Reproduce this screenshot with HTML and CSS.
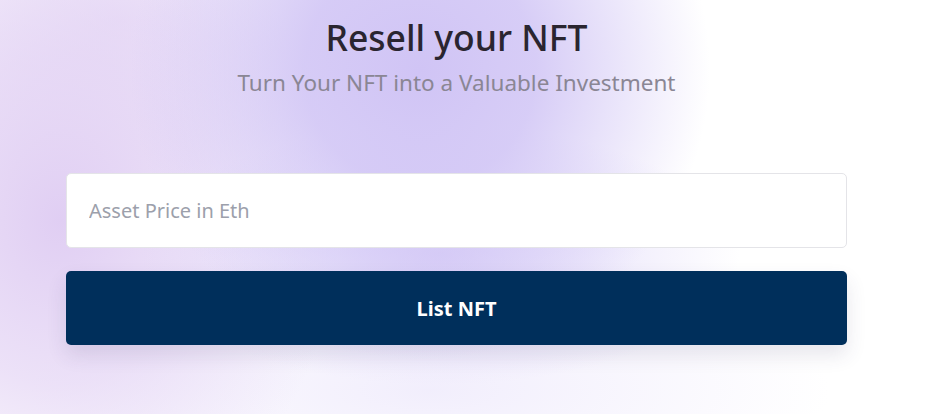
FILE: index.html
```html
<!DOCTYPE html>
<html>
<head>
<meta charset="utf-8">
<link rel="stylesheet" href="styles.css">
</head>
<body>
<div class="page">
  <main class="form-wrap">
    <header class="head">
      <h1 class="title">Resell your NFT</h1>
      <p class="subtitle">Turn Your NFT into a Valuable Investment</p>
    </header>
    <input class="price-input" type="text" placeholder="Asset Price in Eth">
    <button class="list-btn">List NFT</button>
  </main>
</div>
</body>
</html>
```

FILE: styles.css
```css
html, body {
  margin: 0;
  padding: 0;
  height: 100%;
}
body {
  font-family: "Noto Sans", "Open Sans", sans-serif;
  overflow: hidden;
  background:
    radial-gradient(ellipse 290px 290px at 420px 70px, rgba(208,196,245,1) 0%, rgba(208,196,245,0.85) 40%, rgba(208,196,245,0) 100%),
    radial-gradient(ellipse 300px 130px at 440px 255px, rgba(215,205,247,0.9) 0%, rgba(215,205,247,0) 100%),
    radial-gradient(ellipse 280px 330px at 60px 220px, rgba(224,206,243,1) 0%, rgba(224,206,243,0.6) 50%, rgba(224,206,243,0) 100%),
    radial-gradient(ellipse 320px 200px at 120px 20px, rgba(236,226,248,1) 0%, rgba(236,226,248,0) 100%),
    radial-gradient(ellipse 400px 120px at 430px 390px, rgba(240,236,252,0.9) 0%, rgba(240,236,252,0) 100%),
    #ffffff;
}
.page {
  width: 913px;
  height: 414px;
}
.form-wrap {
  width: 781px;
  margin: 0 auto;
  display: flex;
  flex-direction: column;
}
.head {
  text-align: center;
  padding-top: 13px;
}
.title {
  margin: 0;
  font-size: 35.5px;
  font-weight: 500;
  line-height: 48px;
  color: #2a2530;
}
.subtitle {
  margin: 8px 0 0;
  font-size: 22.5px;
  line-height: 28px;
  color: #8a8694;
}
.price-input {
  margin-top: 76px;
  box-sizing: border-box;
  width: 781px;
  height: 75px;
  border: 1px solid #e4e4e8;
  border-radius: 5px;
  background: #fff;
  padding: 0 22px;
  font-family: inherit;
  font-size: 20px;
  color: #333;
  outline: none;
}
.price-input::placeholder {
  color: #9ca0ab;
}
.list-btn {
  margin-top: 23px;
  width: 781px;
  height: 74px;
  border: 0;
  border-radius: 5px;
  background: #002f5b;
  color: #fff;
  font-family: inherit;
  font-size: 20px;
  font-weight: 700;
  box-shadow: 0 10px 20px rgba(60,50,100,0.12);
}
```
